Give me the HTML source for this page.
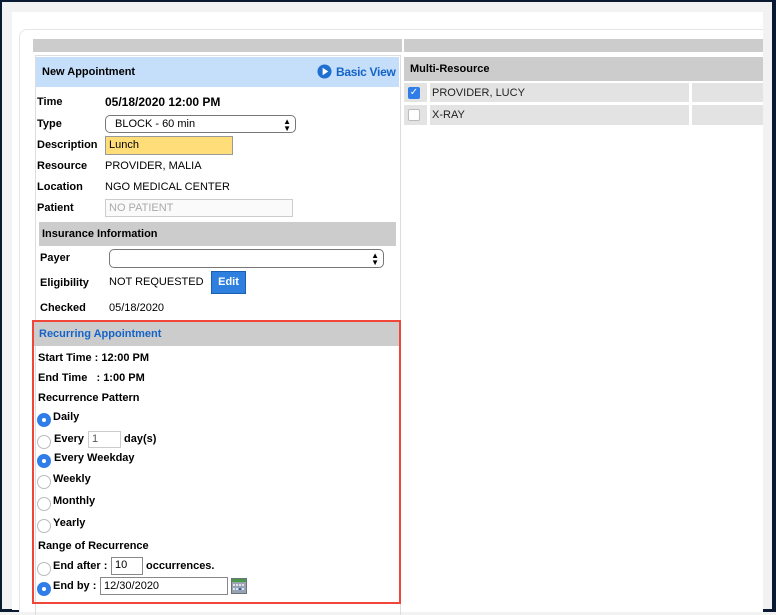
<!DOCTYPE html>
<html><head><meta charset="utf-8"><style>
*{margin:0;padding:0;box-sizing:border-box}
body{width:776px;height:612px;overflow:hidden;background:#f2f2f2;font-family:"Liberation Sans",Arial,sans-serif;font-size:11px;color:#000;position:relative}
.a{position:absolute}
.b{font-weight:bold}
.radio{position:absolute;width:14px;height:14px;border-radius:50%;border:1px solid #bbb;background:#fff}
.radio.on{background:#2f7de8;border-color:#2f7de8}
.radio.on:after{content:"";position:absolute;left:4px;top:4px;width:4px;height:4px;border-radius:50%;background:#fff}
.inp{position:absolute;border:1px solid #aaa;background:#fff;font-size:11px;padding-left:3px;line-height:15px}
</style></head><body>
<div class="a" style="left:0;top:0;width:776px;height:612px;border:2px solid #0b1a33;border-right-width:4px;border-bottom-width:3px"></div>
<div class="a" style="left:12px;top:12px;width:751px;height:598px;background:#fff"></div>
<div class="a" style="left:19px;top:29px;width:744px;height:583px;border:1px solid #e6e6e6;border-right:none;border-bottom:none;border-radius:8px 0 0 0;background:#fff"></div>
<div class="a" style="left:33px;top:39px;width:369px;height:13px;background:#cccccc"></div>
<div class="a" style="left:404px;top:39px;width:359px;height:13px;background:#cccccc"></div>
<div class="a" style="left:35px;top:55px;width:366px;height:560px;border:1px solid #ddd;border-bottom:none"></div>
<div class="a" style="left:36px;top:57px;width:363px;height:30px;background:#c5defa"></div>
<div class="a b" style="left:42px;top:66px">New Appointment</div>
<svg class="a" style="left:317px;top:64px" width="15" height="15" viewBox="0 0 16 16"><circle cx="8" cy="8" r="7.5" fill="#1f6fd1"/><path d="M6 4 L12 8 L6 12 Z" fill="#fff"/></svg>
<div class="a b" style="left:336px;top:65px;color:#1464c8;font-size:12px;letter-spacing:-0.3px">Basic View</div>

<div class="a b" style="left:37px;top:96px">Time</div>
<div class="a b" style="left:105px;top:95px;font-size:12px">05/18/2020 12:00 PM</div>
<div class="a b" style="left:37px;top:118px">Type</div>
<div class="a" style="left:105px;top:115px;width:191px;height:18px;border:1px solid #777;border-radius:5px;padding-left:9px;line-height:16px">BLOCK - 60 min<span class="a" style="right:4px;top:2px;font-size:8px;line-height:7px">▲<br>▼</span></div>
<div class="a b" style="left:37px;top:139px">Description</div>
<div class="inp" style="left:105px;top:136px;width:128px;height:19px;background:#ffde7a;border-color:#999;line-height:17px">Lunch</div>
<div class="a b" style="left:37px;top:160px">Resource</div>
<div class="a" style="left:105px;top:160px">PROVIDER, MALIA</div>
<div class="a b" style="left:37px;top:181px">Location</div>
<div class="a" style="left:105px;top:181px">NGO MEDICAL CENTER</div>
<div class="a b" style="left:37px;top:202px">Patient</div>
<div class="inp" style="left:105px;top:199px;width:188px;height:18px;color:#aaa;border-color:#ccc;background:#fafafa;line-height:16px">NO PATIENT</div>

<div class="a" style="left:39px;top:222px;width:357px;height:24px;background:#cccccc"></div>
<div class="a b" style="left:42px;top:228px">Insurance Information</div>
<div class="a b" style="left:40px;top:252px">Payer</div>
<div class="a" style="left:109px;top:249px;width:275px;height:19px;border:1px solid #777;border-radius:5px"><span class="a" style="right:4px;top:2px;font-size:8px;line-height:7px">▲<br>▼</span></div>
<div class="a b" style="left:40px;top:277px">Eligibility</div>
<div class="a" style="left:109px;top:276px">NOT REQUESTED</div>
<div class="a b" style="left:211px;top:271px;width:35px;height:23px;background:#2f80de;border:1px solid #1a5fb0;color:#fff;text-align:center;line-height:21px;font-size:11px">Edit</div>
<div class="a b" style="left:40px;top:302px">Checked</div>
<div class="a" style="left:109px;top:302px">05/18/2020</div>

<div class="a" style="left:32px;top:320px;width:369px;height:284px;border:2px solid #f0463a"></div>
<div class="a" style="left:34px;top:322px;width:365px;height:24px;background:#cccccc"></div>
<div class="a b" style="left:39px;top:328px;color:#1464c8">Recurring Appointment</div>
<div class="a b" style="left:38px;top:352px">Start Time : 12:00 PM</div>
<div class="a b" style="left:38px;top:372px">End Time &nbsp; : 1:00 PM</div>
<div class="a b" style="left:38px;top:392px">Recurrence Pattern</div>
<div class="radio on" style="left:37px;top:413px"></div><div class="a b" style="left:53px;top:411px">Daily</div>
<div class="radio" style="left:37px;top:435px"></div><div class="a b" style="left:54px;top:433px">Every</div>
<div class="inp" style="left:88px;top:431px;width:33px;height:17px;border-color:#ccc;color:#555">1</div>
<div class="a b" style="left:124px;top:433px">day(s)</div>
<div class="radio on" style="left:37px;top:454px"></div><div class="a b" style="left:54px;top:452px">Every Weekday</div>
<div class="radio" style="left:37px;top:475px"></div><div class="a b" style="left:53px;top:473px">Weekly</div>
<div class="radio" style="left:37px;top:497px"></div><div class="a b" style="left:53px;top:495px">Monthly</div>
<div class="radio" style="left:37px;top:519px"></div><div class="a b" style="left:53px;top:517px">Yearly</div>
<div class="a b" style="left:38px;top:540px">Range of Recurrence</div>
<div class="radio" style="left:37px;top:562px"></div><div class="a b" style="left:53px;top:560px">End after :</div>
<div class="inp" style="left:111px;top:557px;width:32px;height:18px;border-color:#888">10</div>
<div class="a b" style="left:146px;top:560px">occurrences.</div>
<div class="radio on" style="left:37px;top:582px"></div><div class="a b" style="left:53px;top:580px">End by :</div>
<div class="inp" style="left:100px;top:577px;width:128px;height:18px;border-color:#888;line-height:16px">12/30/2020</div>
<svg class="a" style="left:231px;top:578px" width="16" height="16" viewBox="0 0 16 16"><rect x="0.5" y="0.5" width="15" height="15" fill="#9aa4b0" stroke="#6a737d"/><rect x="1" y="1" width="14" height="3" fill="#4a9a4a"/><g fill="#dfe5ec"><rect x="2" y="6" width="2" height="2"/><rect x="5" y="6" width="2" height="2"/><rect x="8" y="6" width="2" height="2"/><rect x="11" y="6" width="2" height="2"/><rect x="2" y="10" width="2" height="2"/><rect x="5" y="10" width="2" height="2"/><rect x="11" y="10" width="2" height="2"/></g><rect x="8" y="10" width="2" height="2" fill="#1f5fd0"/></svg>

<div class="a" style="left:404px;top:57px;width:359px;height:24px;background:#cccccc"></div>
<div class="a b" style="left:410px;top:63px">Multi-Resource</div>
<div class="a" style="left:404px;top:83px;width:23px;height:19px;background:#e3e3e3"></div>
<div class="a" style="left:430px;top:83px;width:259px;height:19px;background:#e3e3e3"></div>
<div class="a" style="left:692px;top:83px;width:71px;height:19px;background:#e3e3e3"></div>
<div class="a" style="left:404px;top:105px;width:23px;height:20px;background:#e3e3e3"></div>
<div class="a" style="left:430px;top:105px;width:259px;height:20px;background:#e3e3e3"></div>
<div class="a" style="left:692px;top:105px;width:71px;height:20px;background:#e3e3e3"></div>
<div class="a" style="left:408px;top:87px;width:12px;height:12px;border-radius:2px;background:#2f7de8;color:#fff;font-size:10px;line-height:12px;text-align:center">✓</div>
<div class="a" style="left:408px;top:109px;width:12px;height:12px;border-radius:2px;background:#fff;border:1px solid #bbb"></div>
<div class="a" style="left:432px;top:87px;color:#222">PROVIDER, LUCY</div>
<div class="a" style="left:432px;top:109px;color:#222">X-RAY</div>
</body></html>
